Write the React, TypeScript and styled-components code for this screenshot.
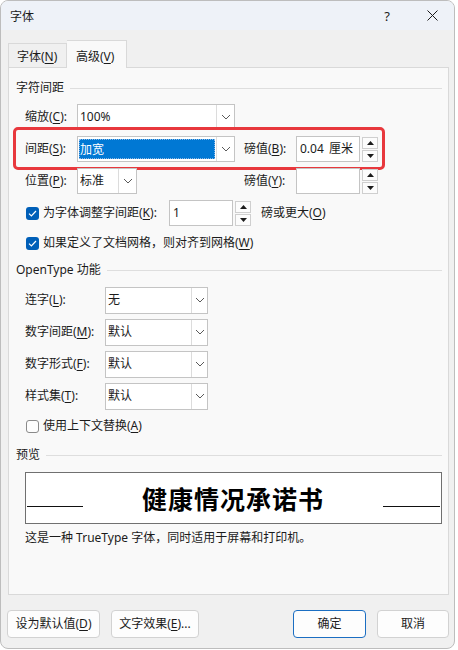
import React from "react";
import styled, { createGlobalStyle } from "styled-components";

const Global = createGlobalStyle`
  html, body { margin: 0; padding: 0; background: #ffffff; }
  body {
    font-family: "Noto Sans", "Noto Sans CJK SC", sans-serif;
    font-size: 12px;
    color: #1b1b1b;
  }
  * { box-sizing: border-box; }
  u { text-underline-offset: 2px; }
`;

const Window = styled.div`
  width: 455px;
  height: 649px;
  border: 1px solid #bdbdbd;
  border-radius: 8px;
  background: #f0f0f0;
  overflow: hidden;
  display: flex;
  flex-direction: column;
`;

const TitleBar = styled.div`
  height: 29px;
  flex: none;
  background: #eef2f8;
  display: flex;
  align-items: center;
  padding-left: 9px;
  font-size: 12px;
`;

const TitleText = styled.div`
  flex: 1;
`;

const TitleButton = styled.div<{ $w: number }>`
  width: ${(p) => p.$w}px;
  height: 29px;
  display: flex;
  align-items: center;
  justify-content: center;
  font-size: 13px;
  color: #1b1b1b;
`;

const TabStrip = styled.div`
  margin-top: 10px;
  padding-left: 7px;
  height: 27px;
  flex: none;
  display: flex;
  align-items: flex-end;
`;

const Tab = styled.div<{ $active?: boolean; $w: number }>`
  position: relative;
  z-index: ${(p) => (p.$active ? 2 : 1)};
  width: ${(p) => p.$w}px;
  height: ${(p) => (p.$active ? 28 : 24)}px;
  margin-bottom: ${(p) => (p.$active ? -1 : 0)}px;
  padding-left: ${(p) => (p.$active ? 9 : 8)}px;
  padding-top: ${(p) => (p.$active ? 4 : 2)}px;
  border: 1px solid #d9d9d9;
  border-bottom: none;
  border-left: ${(p) => (p.$active ? "none" : "1px solid #d9d9d9")};
  background: ${(p) => (p.$active ? "#f9f9f9" : "#f0f0f0")};
  display: flex;
  align-items: center;
  line-height: 16px;
`;

const Panel = styled.div`
  margin-left: 7px;
  width: 441px;
  height: 528px;
  flex: none;
  border: 1px solid #d9d9d9;
  background: #f9f9f9;
  padding: 10px 6px 0 7px;
  display: flex;
  flex-direction: column;
`;

const Header = styled.div<{ $mt?: number }>`
  height: 20px;
  margin-top: ${(p) => p.$mt ?? 0}px;
  display: flex;
  align-items: center;
  gap: 6px;
  line-height: 16px;
  &::after {
    content: "";
    flex: 1;
    height: 1px;
    background: #dedede;
  }
`;

const Section = styled.div<{ $mt?: number }>`
  padding-left: 9px;
  margin-top: ${(p) => p.$mt ?? 0}px;
  display: flex;
  flex-direction: column;
`;

const GridRow = styled.div`
  position: relative;
  height: 32px;
  display: grid;
  grid-template-columns: 52px 167px 52px auto;
  align-items: center;
`;

const Row = styled.div<{ $h?: number }>`
  position: relative;
  height: ${(p) => p.$h ?? 32}px;
  display: flex;
  align-items: center;
`;

const Label = styled.div<{ $w?: number }>`
  width: ${(p) => (p.$w ? `${p.$w}px` : "auto")};
  flex: none;
  white-space: nowrap;
  line-height: 16px;
`;

const Combo = styled.div<{ $w: number; $h?: number }>`
  width: ${(p) => p.$w}px;
  height: ${(p) => p.$h ?? 26}px;
  border: 1px solid #c4c4c4;
  background: #ffffff;
  display: flex;
`;

const ComboValue = styled.div`
  flex: 1;
  padding-left: 2px;
  display: flex;
  align-items: center;
  line-height: 16px;
  white-space: nowrap;
  overflow: hidden;
`;

const Selected = styled.div`
  flex: 1;
  align-self: stretch;
  margin: 2px 1px 2px 1px;
  padding-left: 1px;
  background: #0078d4;
  color: #ffffff;
  display: flex;
  align-items: center;
  outline: 1px dotted #8ab8e6;
  outline-offset: -1px;
`;

const ComboArrow = styled.div<{ $w?: number }>`
  width: ${(p) => p.$w ?? 18}px;
  flex: none;
  border-left: 1px solid #dcdcdc;
  display: flex;
  align-items: center;
  justify-content: center;
`;

const Spin = styled.div`
  display: flex;
  align-items: center;
  gap: 2px;
`;

const TextBox = styled.div<{ $w: number }>`
  width: ${(p) => p.$w}px;
  height: 26px;
  border: 1px solid #c4c4c4;
  background: #ffffff;
  padding-left: 3px;
  display: flex;
  align-items: center;
  line-height: 16px;
  white-space: nowrap;
  word-spacing: 2px;
`;

const SpinButtons = styled.div`
  width: 16px;
  display: flex;
  flex-direction: column;
  gap: 1px;
`;

const SpinButton = styled.div`
  height: 12px;
  border: 1px solid #cfcfcf;
  background: #fcfcfc;
  display: flex;
  align-items: center;
  justify-content: center;
`;

const Highlight = styled.div`
  position: absolute;
  left: -12px;
  top: -6px;
  width: 372px;
  height: 43px;
  border: 3px solid #e8383d;
  border-radius: 5px;
  pointer-events: none;
`;

const CheckBox = styled.div<{ $checked?: boolean }>`
  width: 13px;
  height: 13px;
  flex: none;
  margin-left: 1px;
  margin-right: 4px;
  border-radius: 3px;
  background: ${(p) => (p.$checked ? "#005fb8" : "#fdfdfd")};
  border: ${(p) => (p.$checked ? "none" : "1px solid #8a8a8a")};
  display: flex;
  align-items: center;
  justify-content: center;
`;

const CheckGroup = styled.div<{ $w?: number }>`
  width: ${(p) => (p.$w ? `${p.$w}px` : "auto")};
  flex: none;
  display: flex;
  align-items: center;
`;

const Suffix = styled.div`
  margin-left: 10px;
  line-height: 16px;
`;

const PreviewBox = styled.div`
  margin-top: 7px;
  height: 52px;
  border: 1px solid #707070;
  background: #ffffff;
  padding: 0 1px;
  display: flex;
  align-items: center;
  justify-content: space-between;
`;

const Rule = styled.div<{ $w: number }>`
  width: ${(p) => p.$w}px;
  height: 1px;
  background: #111111;
  margin-top: 16px;
`;

const PreviewText = styled.div`
  font-family: "Noto Sans CJK SC", sans-serif;
  font-size: 25px;
  font-weight: 700;
  letter-spacing: 1px;
  color: #000000;
  line-height: 30px;
`;

const Description = styled.div`
  margin-top: 6px;
  line-height: 16px;
`;

const Footer = styled.div`
  margin-top: 15px;
  padding: 0 5px 0 6px;
  display: flex;
  justify-content: space-between;
`;

const ButtonGroup = styled.div`
  display: flex;
  gap: 11px;
`;

const Button = styled.div<{ $w: number; $primary?: boolean }>`
  width: ${(p) => p.$w}px;
  height: 28px;
  border: 1px solid ${(p) => (p.$primary ? "#1b6ec2" : "#d2d2d2")};
  border-radius: 4px;
  background: #fdfdfd;
  display: flex;
  align-items: center;
  justify-content: center;
  line-height: 16px;
  white-space: nowrap;
`;

const Chevron = () => (
  <svg width="10" height="6" viewBox="0 0 10 6">
    <path d="M1 1 L5 5 L9 1" fill="none" stroke="#5a5a5a" strokeWidth="1" />
  </svg>
);

const Up = () => (
  <svg width="7" height="4" viewBox="0 0 7 4">
    <path d="M0 4 L3.5 0 L7 4 Z" fill="#1b1b1b" />
  </svg>
);

const Down = () => (
  <svg width="7" height="4" viewBox="0 0 7 4">
    <path d="M0 0 L3.5 4 L7 0 Z" fill="#1b1b1b" />
  </svg>
);

const Check = () => (
  <svg width="9" height="7" viewBox="0 0 9 7">
    <path d="M1 3.6 L3.4 6 L8 1" fill="none" stroke="#ffffff" strokeWidth="1.2" />
  </svg>
);

const CloseIcon = () => (
  <svg width="11" height="11" viewBox="0 0 11 11">
    <path d="M0.5 0.5 L10.5 10.5 M10.5 0.5 L0.5 10.5" stroke="#1b1b1b" strokeWidth="1" />
  </svg>
);

const SpinBox = ({ value, w }: { value: string; w: number }) => (
  <Spin>
    <TextBox $w={w}>{value}</TextBox>
    <SpinButtons>
      <SpinButton>
        <Up />
      </SpinButton>
      <SpinButton>
        <Down />
      </SpinButton>
    </SpinButtons>
  </Spin>
);

const OTRow = ({ label, value }: { label: React.ReactNode; value: string }) => (
  <Row>
    <Label $w={80}>{label}</Label>
    <Combo $w={103} $h={27}>
      <ComboValue>{value}</ComboValue>
      <ComboArrow $w={16}>
        <Chevron />
      </ComboArrow>
    </Combo>
  </Row>
);

export default function App() {
  return (
    <>
      <Global />
      <Window>
        <TitleBar>
          <TitleText>字体</TitleText>
          <TitleButton $w={46}>?</TitleButton>
          <TitleButton $w={44}>
            <CloseIcon />
          </TitleButton>
        </TitleBar>

        <TabStrip>
          <Tab $w={59}>
            字体(<u>N</u>)
          </Tab>
          <Tab $w={60} $active>
            高级(<u>V</u>)
          </Tab>
        </TabStrip>

        <Panel>
          <Header>字符间距</Header>
          <Section $mt={3}>
            <GridRow>
              <Label>
                缩放(<u>C</u>):
              </Label>
              <Combo $w={158}>
                <ComboValue>100%</ComboValue>
                <ComboArrow>
                  <Chevron />
                </ComboArrow>
              </Combo>
            </GridRow>
            <GridRow>
              <Label>
                间距(<u>S</u>):
              </Label>
              <Combo $w={158}>
                <Selected>加宽</Selected>
                <ComboArrow>
                  <Chevron />
                </ComboArrow>
              </Combo>
              <Label>
                磅值(<u>B</u>):
              </Label>
              <SpinBox value="0.04 厘米" w={64} />
              <Highlight />
            </GridRow>
            <GridRow>
              <Label>
                位置(<u>P</u>):
              </Label>
              <Combo $w={60}>
                <ComboValue>标准</ComboValue>
                <ComboArrow>
                  <Chevron />
                </ComboArrow>
              </Combo>
              <Label>
                磅值(<u>Y</u>):
              </Label>
              <SpinBox value="" w={64} />
            </GridRow>
            <Row>
              <CheckGroup $w={144}>
                <CheckBox $checked>
                  <Check />
                </CheckBox>
                <Label>
                  为字体调整字间距(<u>K</u>):
                </Label>
              </CheckGroup>
              <SpinBox value="1" w={64} />
              <Suffix>
                磅或更大(<u>O</u>)
              </Suffix>
            </Row>
            <Row $h={28}>
              <CheckGroup>
                <CheckBox $checked>
                  <Check />
                </CheckBox>
                <Label>
                  如果定义了文档网格，则对齐到网格(<u>W</u>)
                </Label>
              </CheckGroup>
            </Row>
          </Section>

          <Header $mt={3}>OpenType 功能</Header>
          <Section $mt={4}>
            <OTRow
              label={
                <>
                  连字(<u>L</u>):
                </>
              }
              value="无"
            />
            <OTRow
              label={
                <>
                  数字间距(<u>M</u>):
                </>
              }
              value="默认"
            />
            <OTRow
              label={
                <>
                  数字形式(<u>F</u>):
                </>
              }
              value="默认"
            />
            <OTRow
              label={
                <>
                  样式集(<u>T</u>):
                </>
              }
              value="默认"
            />
            <Row $h={28}>
              <CheckGroup>
                <CheckBox />
                <Label>
                  使用上下文替换(<u>A</u>)
                </Label>
              </CheckGroup>
            </Row>
          </Section>

          <Header $mt={5}>预览</Header>
          <Section>
            <PreviewBox>
              <Rule $w={56} />
              <PreviewText>健康情况承诺书</PreviewText>
              <Rule $w={57} />
            </PreviewBox>
            <Description>这是一种 TrueType 字体，同时适用于屏幕和打印机。</Description>
          </Section>
        </Panel>

        <Footer>
          <ButtonGroup>
            <Button $w={93}>
              设为默认值(<u>D</u>)
            </Button>
            <Button $w={88}>
              文字效果(<u>E</u>)...
            </Button>
          </ButtonGroup>
          <ButtonGroup>
            <Button $w={73} $primary>
              确定
            </Button>
            <Button $w={72}>取消</Button>
          </ButtonGroup>
        </Footer>
      </Window>
    </>
  );
}
